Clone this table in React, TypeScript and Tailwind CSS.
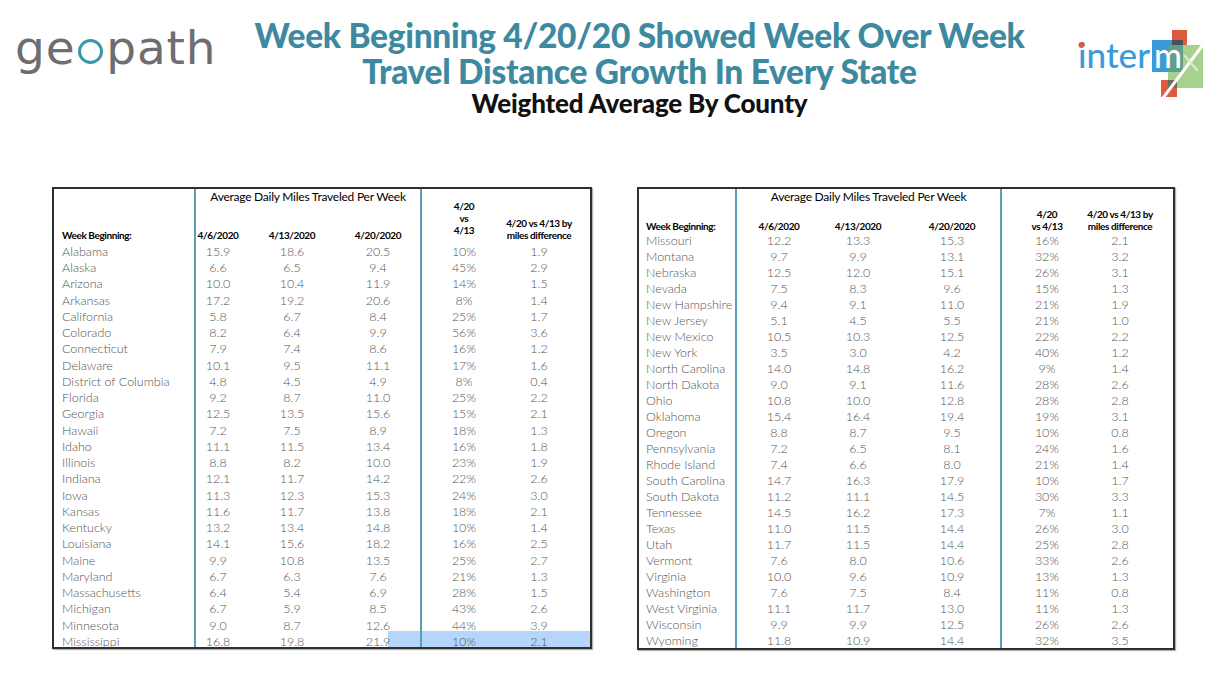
import type { ReactNode } from "react";

type Row = [string, string, string, string, string, string];

const leftRows: Row[] = [
  ["Alabama", "15.9", "18.6", "20.5", "10%", "1.9"],
  ["Alaska", "6.6", "6.5", "9.4", "45%", "2.9"],
  ["Arizona", "10.0", "10.4", "11.9", "14%", "1.5"],
  ["Arkansas", "17.2", "19.2", "20.6", "8%", "1.4"],
  ["California", "5.8", "6.7", "8.4", "25%", "1.7"],
  ["Colorado", "8.2", "6.4", "9.9", "56%", "3.6"],
  ["Connecticut", "7.9", "7.4", "8.6", "16%", "1.2"],
  ["Delaware", "10.1", "9.5", "11.1", "17%", "1.6"],
  ["District of Columbia", "4.8", "4.5", "4.9", "8%", "0.4"],
  ["Florida", "9.2", "8.7", "11.0", "25%", "2.2"],
  ["Georgia", "12.5", "13.5", "15.6", "15%", "2.1"],
  ["Hawaii", "7.2", "7.5", "8.9", "18%", "1.3"],
  ["Idaho", "11.1", "11.5", "13.4", "16%", "1.8"],
  ["Illinois", "8.8", "8.2", "10.0", "23%", "1.9"],
  ["Indiana", "12.1", "11.7", "14.2", "22%", "2.6"],
  ["Iowa", "11.3", "12.3", "15.3", "24%", "3.0"],
  ["Kansas", "11.6", "11.7", "13.8", "18%", "2.1"],
  ["Kentucky", "13.2", "13.4", "14.8", "10%", "1.4"],
  ["Louisiana", "14.1", "15.6", "18.2", "16%", "2.5"],
  ["Maine", "9.9", "10.8", "13.5", "25%", "2.7"],
  ["Maryland", "6.7", "6.3", "7.6", "21%", "1.3"],
  ["Massachusetts", "6.4", "5.4", "6.9", "28%", "1.5"],
  ["Michigan", "6.7", "5.9", "8.5", "43%", "2.6"],
  ["Minnesota", "9.0", "8.7", "12.6", "44%", "3.9"],
  ["Mississippi", "16.8", "19.8", "21.9", "10%", "2.1"],
];

const rightRows: Row[] = [
  ["Missouri", "12.2", "13.3", "15.3", "16%", "2.1"],
  ["Montana", "9.7", "9.9", "13.1", "32%", "3.2"],
  ["Nebraska", "12.5", "12.0", "15.1", "26%", "3.1"],
  ["Nevada", "7.5", "8.3", "9.6", "15%", "1.3"],
  ["New Hampshire", "9.4", "9.1", "11.0", "21%", "1.9"],
  ["New Jersey", "5.1", "4.5", "5.5", "21%", "1.0"],
  ["New Mexico", "10.5", "10.3", "12.5", "22%", "2.2"],
  ["New York", "3.5", "3.0", "4.2", "40%", "1.2"],
  ["North Carolina", "14.0", "14.8", "16.2", "9%", "1.4"],
  ["North Dakota", "9.0", "9.1", "11.6", "28%", "2.6"],
  ["Ohio", "10.8", "10.0", "12.8", "28%", "2.8"],
  ["Oklahoma", "15.4", "16.4", "19.4", "19%", "3.1"],
  ["Oregon", "8.8", "8.7", "9.5", "10%", "0.8"],
  ["Pennsylvania", "7.2", "6.5", "8.1", "24%", "1.6"],
  ["Rhode Island", "7.4", "6.6", "8.0", "21%", "1.4"],
  ["South Carolina", "14.7", "16.3", "17.9", "10%", "1.7"],
  ["South Dakota", "11.2", "11.1", "14.5", "30%", "3.3"],
  ["Tennessee", "14.5", "16.2", "17.3", "7%", "1.1"],
  ["Texas", "11.0", "11.5", "14.4", "26%", "3.0"],
  ["Utah", "11.7", "11.5", "14.4", "25%", "2.8"],
  ["Vermont", "7.6", "8.0", "10.6", "33%", "2.6"],
  ["Virginia", "10.0", "9.6", "10.9", "13%", "1.3"],
  ["Washington", "7.6", "7.5", "8.4", "11%", "0.8"],
  ["West Virginia", "11.1", "11.7", "13.0", "11%", "1.3"],
  ["Wisconsin", "9.9", "9.9", "12.5", "26%", "2.6"],
  ["Wyoming", "11.8", "10.9", "14.4", "32%", "3.5"],
];

interface TableProps {
  rows: Row[];
  cols: string;
  headBottomH: string;
  rowH: string;
  rowPad: string;
  namePad: string;
  c3Pad: string;
  diffPad: string;
  pctHeader: ReactNode;
  highlightLast?: boolean;
}

const head = "font-bold text-[10px] leading-[12px] tracking-[-0.04em] text-black whitespace-nowrap";
const cell = "flex items-center justify-center text-[12.5px] font-light text-[#555] leading-none";
const blue = "border-l-2 border-[#5a9fb6]";

function DataTable({
  rows,
  cols,
  headBottomH,
  rowH,
  rowPad,
  namePad,
  c3Pad,
  diffPad,
  pctHeader,
  highlightLast,
}: TableProps) {
  return (
    <div className={`grid ${cols} border-2 border-[#2f2f2f] shadow-[1px_1px_1px_rgba(0,0,0,0.3)]`}>
      {/* header */}
      <div className={`row-span-2 flex items-end ${namePad} ${head}`}>Week Beginning:</div>
      <div className={`col-span-3 h-[16px] ${blue} flex items-center justify-center text-[12px] text-black tracking-[-0.02em]`}>
        Average Daily Miles Traveled Per Week
      </div>
      <div className={`row-span-2 ${blue} flex flex-col items-center justify-end text-center ${head}`}>{pctHeader}</div>
      <div className={`row-span-2 flex flex-col items-center justify-end text-center ${diffPad} ${head}`}>
        <div>4/20 vs 4/13 by</div>
        <div>miles difference</div>
      </div>
      <div className={`${headBottomH} ${blue} flex items-end justify-center ${head}`}>4/6/2020</div>
      <div className={`flex items-end justify-center ${head}`}>4/13/2020</div>
      <div className={`flex items-end justify-center ${c3Pad} ${head}`}>4/20/2020</div>

      {/* body */}
      {rows.map((r, i) => {
        const hl = highlightLast && i === rows.length - 1;
        return [
          <div
            key={`${r[0]}-n`}
            className={`${rowH} ${rowPad} ${namePad} flex items-center text-[12.5px] font-light text-[#555] leading-none whitespace-nowrap`}
          >
            {r[0]}
          </div>,
          <div key={`${r[0]}-a`} className={`${rowH} ${rowPad} ${blue} ${cell}`}>{r[1]}</div>,
          <div key={`${r[0]}-b`} className={`${rowH} ${rowPad} ${cell}`}>{r[2]}</div>,
          <div
            key={`${r[0]}-c`}
            className={`${rowH} ${rowPad} ${c3Pad} ${cell} ${hl ? "bg-[linear-gradient(to_right,transparent_44px,#b5d6fa_44px)]" : ""}`}
          >
            {r[3]}
          </div>,
          <div key={`${r[0]}-d`} className={`${rowH} ${rowPad} ${blue} ${cell} ${hl ? "bg-[#b5d6fa]" : ""}`}>{r[4]}</div>,
          <div key={`${r[0]}-e`} className={`${rowH} ${rowPad} ${diffPad} ${cell} ${hl ? "bg-[#b5d6fa]" : ""}`}>{r[5]}</div>,
        ];
      })}
    </div>
  );
}

function GeopathLogo() {
  return (
    <div className="flex items-baseline pl-[15px] pt-[24px] font-['DejaVu_Sans',sans-serif] text-[47px] leading-none text-[#6d6e71] tracking-[0.8px]">
      <span>ge</span>
      <span className="inline-block w-[25px] h-[25px] rounded-full border-[3.5px] border-[#3a97a9] mx-[3px] mb-[8px]" />
      <span>path</span>
    </div>
  );
}

function IntermxLogo() {
  return (
    <svg width="140" height="80" viewBox="0 0 140 80" className="ml-[44px] mt-[25px]">
      <rect x="84" y="15" width="31" height="32" fill="#3b9ad9" />
      <rect x="104" y="5" width="15" height="15" fill="#e2583e" />
      <rect x="104" y="15" width="11" height="5" fill="#46505a" />
      <rect x="100" y="20" width="35" height="43" fill="#a6d18f" />
      <rect x="100" y="20" width="15" height="27" fill="#5f9e88" />
      <rect x="93" y="55" width="16" height="17" fill="#e2583e" />
      <rect x="100" y="55" width="9" height="8" fill="#6b6f58" />
      <text
        x="10"
        y="43"
        textLength="72"
        lengthAdjust="spacingAndGlyphs"
        fontFamily="Lato, sans-serif"
        fontWeight="500"
        fontSize="34"
        fill="#3b9ad9"
      >
        inter
      </text>
      <circle cx="13.5" cy="20" r="3" fill="#e2583e" />
      <text
        x="86"
        y="43"
        textLength="28"
        lengthAdjust="spacingAndGlyphs"
        fontFamily="Lato, sans-serif"
        fontWeight="500"
        fontSize="34"
        fill="#ffffff"
      >
        m
      </text>
      <line x1="137" y1="17" x2="95" y2="73" stroke="#ffffff" strokeWidth="3" />
      <line x1="116" y1="30" x2="130" y2="46" stroke="#d8ecd0" strokeWidth="2" />
    </svg>
  );
}

export default function App() {
  return (
    <div className="w-[1216px] h-[675px] bg-white overflow-hidden font-['Lato',sans-serif]">
      <header className="flex h-[120px]">
        <div className="w-[255px] shrink-0">
          <GeopathLogo />
        </div>
        <div className="flex-1 min-w-0 flex flex-col items-center pt-[17px] font-['Lato',sans-serif] font-black whitespace-nowrap">
          <div className="text-[33.5px] leading-[36px] text-[#3d8aa0] text-center tracking-[-0.3px]">
            <div>Week Beginning 4/20/20 Showed Week Over Week</div>
            <div>Travel Distance Growth In Every State</div>
          </div>
          <div className="mt-[1px] text-[26px] leading-[26px] text-[#111] tracking-[-0.2px]">Weighted Average By County</div>
        </div>
        <div className="w-[192px] shrink-0">
          <IntermxLogo />
        </div>
      </header>

      <main className="flex items-start gap-[45px] pl-[52px] pt-[67px]">
        <DataTable
          rows={leftRows}
          cols="grid-cols-[140px_46px_104px_76px_86px_84px]"
          headBottomH="h-[36px]"
          rowH="h-[16.25px]"
          rowPad="pt-[6px]"
          namePad="pl-[8px]"
          c3Pad="pr-[8px]"
          diffPad="pr-[18px]"
          pctHeader={
            <div className="pb-[5px]">
              <div>4/20</div>
              <div>vs</div>
              <div>4/13</div>
            </div>
          }
          highlightLast
        />
        <DataTable
          rows={rightRows}
          cols="grid-cols-[96px_86px_74px_105px_92px_81px]"
          headBottomH="h-[27px]"
          rowH="h-[16px]"
          rowPad="pt-[2px]"
          namePad="pl-[7px]"
          c3Pad="pl-[9px]"
          diffPad="pr-[25px]"
          pctHeader={
            <div>
              <div>4/20</div>
              <div>vs 4/13</div>
            </div>
          }
        />
      </main>
    </div>
  );
}
